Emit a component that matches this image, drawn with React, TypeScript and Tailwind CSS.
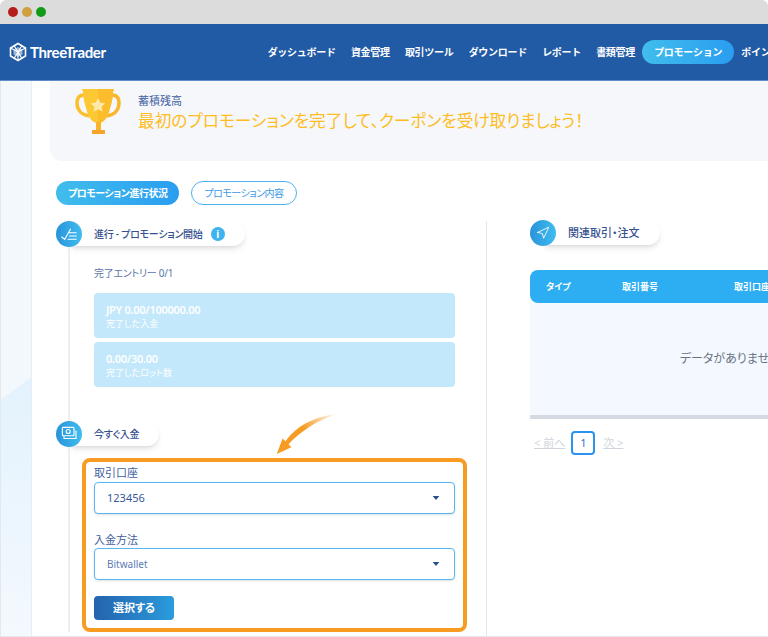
import React from "react";
import { Navigation } from "lucide-react";

const navItems = ["ダッシュボード", "資金管理", "取引ツール", "ダウンロード", "レポート", "書類管理"];

function Logo() {
  return (
    <svg viewBox="0 0 20 20" className="w-5 h-5 shrink-0" fill="none" stroke="white" strokeWidth="2">
      <path d="M10 1.5 17.5 6v8L10 18.5 2.5 14V6Z" strokeWidth="1.6" />
      <path d="M10 5 14.5 7.5v5L10 15l-4.5-2.5v-5Z" fill="white" stroke="none" opacity="0.55" />
      <path d="M2.5 6 10 10l7.5-4M10 10v8.5M6 3.5l8 13M14 3.5l-8 13" strokeWidth="1.1" />
    </svg>
  );
}

function Trophy() {
  return (
    <svg viewBox="0 0 46 46" className="w-11.5 h-11.5 shrink-0">
      <path d="M9 6C4 6 2 9 2 14c0 8 6 12 12 13" fill="none" stroke="#fbbf2d" strokeWidth="3.5" />
      <path d="M37 6c5 0 7 3 7 8 0 8-6 12-12 13" fill="none" stroke="#f9b62b" strokeWidth="3.5" />
      <path d="M7 0h32l-1 3c0 4-1 10-3 16-2 9-6 15-12 15S13 28 11 19C9 13 8 7 8 3Z" fill="#fdc833" />
      <path d="M23 0h16l-1 3c0 4-1 10-3 16-2 9-6 15-12 15Z" fill="#fbbd2c" />
      <rect x="21" y="33" width="5" height="9" fill="#f9b62b" />
      <rect x="17" y="41" width="13" height="4" rx="0.5" fill="#f6a52a" />
      <path d="m23 9 2.2 4.5 5 .7-3.6 3.5.9 5-4.5-2.4-4.5 2.4.9-5-3.6-3.5 5-.7Z" fill="#fdeaa8" />
    </svg>
  );
}

function CheckListIcon() {
  return (
    <svg viewBox="0 0 20 20" className="w-5 h-5" fill="none" stroke="white" strokeWidth="1.1">
      <path d="M2.4 12.7l3.3 2.6 6-10.6M10 8.7h7.7M10 12h7.7M8.5 15.3h9.2" />
    </svg>
  );
}

function MoneyIcon() {
  return (
    <svg viewBox="0 0 20 20" className="w-5 h-5" fill="none" stroke="white" strokeWidth="1.1">
      <rect x="3.4" y="3.4" width="11.6" height="8.3" rx="0.8" />
      <circle cx="9.2" cy="7.5" r="2" />
      <path d="M5 12v2.5h12V6.5" />
    </svg>
  );
}

function Heading({ icon, children }: { icon: React.ReactNode; children: React.ReactNode }) {
  return (
    <div className="flex items-center h-6.5">
      <div className="z-10 w-6.5 h-6.5 rounded-full bg-linear-to-r from-[#2a93d9] to-[#3fbdf0] flex items-center justify-center shrink-0">
        {icon}
      </div>
      <div className="-ml-3 pl-6 pr-5 h-6 flex items-center gap-2 rounded-r-full bg-white shadow-md text-[#36518f] text-[10px] tracking-tight font-medium">
        {children}
      </div>
    </div>
  );
}

function ProgressCard({ value, label }: { value: string; label: string }) {
  return (
    <div className="h-11.25 rounded-sm bg-[#c3e8fb] px-3 flex flex-col justify-center text-white">
      <div className="text-[11px] leading-4 font-semibold tracking-tight">{value}</div>
      <div className="text-[9px] leading-3">{label}</div>
    </div>
  );
}

function SelectBox({ value, light }: { value: string; light?: boolean }) {
  return (
    <div className="h-8 rounded-sm border border-[#57b6f4] bg-white px-3 flex items-center justify-between shadow-sm">
      <span className={light ? "text-[10px] text-[#5d7bb5]" : "text-[11px] text-[#36589a]"}>{value}</span>
      <svg viewBox="0 0 10 6" className="w-2 h-1 mr-0.5">
        <path d="M0 0h10L5 6Z" fill="#24508f" />
      </svg>
    </div>
  );
}

export default function App() {
  return (
    <div className="h-screen w-full overflow-hidden flex flex-col bg-white font-['Noto_Sans','Noto_Sans_CJK_JP',sans-serif] [font-feature-settings:'palt']">
      <div className="h-6 shrink-0 bg-[#dcdcdc] flex items-center gap-1 pl-2 rounded-t-md">
        <span className="w-2.5 h-2.5 rounded-full bg-[#b71c1c]" />
        <span className="w-2.5 h-2.5 rounded-full bg-[#cfa03f]" />
        <span className="w-2.5 h-2.5 rounded-full bg-[#119b16]" />
      </div>

      <header className="h-14.25 shrink-0 bg-[#215aa5] border-b border-[#5f8cc6] flex items-center pl-2 whitespace-nowrap text-white">
        <Logo />
        <span className="ml-0.5 text-[15px] font-bold tracking-tight font-['Lato',sans-serif]">ThreeTrader</span>
        <nav className="ml-40.5 flex items-center gap-3.75 text-[10px] tracking-tight font-bold shrink-0 [font-feature-settings:normal]">
          {navItems.map((item) => (
            <span key={item}>{item}</span>
          ))}
          <span className="-mx-2 h-6 px-3 flex items-center rounded-full bg-linear-to-r from-[#41bdec] to-[#2a9df0]">プロモーション</span>
          <span>ポイント</span>
        </nav>
      </header>

      <div className="flex-1 min-h-0 flex border-b border-gray-200">
        <div className="relative w-8 shrink-0 bg-[#f3f8fd] border-l border-r border-l-gray-200 border-r-[#e6edf4]">
          <svg viewBox="0 0 30 556" preserveAspectRatio="none" className="absolute inset-0 w-full h-full">
            <defs>
              <linearGradient id="wedge" x1="0" y1="297" x2="0" y2="556" gradientUnits="userSpaceOnUse">
                <stop offset="0" stopColor="#e3f2fd" />
                <stop offset="1" stopColor="#f3f9fe" />
              </linearGradient>
            </defs>
            <path d="M0 319 30 297V556H0Z" fill="url(#wedge)" />
          </svg>
        </div>
        <main className="flex-1 min-w-0">
          <section className="ml-4.5 h-20 rounded-bl-xl bg-[#f6f7fa] flex items-start pl-6.25 pt-2 gap-4.25">
            <Trophy />
            <div className="pt-1">
              <div className="text-[11px] leading-4 text-[#3f5f9f]">蓄積残高</div>
              <div className="text-[16.7px] leading-6 text-[#fdbd22] whitespace-nowrap">最初のプロモーションを完了して、クーポンを受け取りましょう！</div>
            </div>
          </section>

          <div className="ml-6 mt-5 flex gap-3">
            <button className="h-6 px-3 rounded-full bg-linear-to-r from-[#41bdec] to-[#2a9df0] text-white text-[10px] tracking-tighter font-bold">プロモーション進行状況</button>
            <button className="h-6 px-3 rounded-full border border-[#4db2ef] bg-white text-[#3e9be6] text-[10px] tracking-tighter">プロモーション内容</button>
          </div>

          <div className="ml-6 mt-4 flex">
            <div className="w-[431px] shrink-0 border-r border-gray-200 pb-8">
              <div className="ml-3 border-l-2 border-[#eceef2] pl-6 pr-7.75">
                <div className="-ml-9.5">
                  <Heading icon={<CheckListIcon />}>
                    進行 - プロモーション開始
                    <span className="w-3.5 h-3.5 rounded-full bg-[#3fb3ee] text-white text-[10px] font-bold flex items-center justify-center">i</span>
                  </Heading>
                </div>
                <div className="mt-4.5 text-[10px] tracking-tight leading-4 text-[#5c74a8]">完了エントリー 0/1</div>
                <div className="mt-3 flex flex-col gap-1">
                  <ProgressCard value="JPY 0.00/100000.00" label="完了した入金" />
                  <ProgressCard value="0.00/30.00" label="完了したロット数" />
                </div>
                <div className="mt-8.5 -ml-9.5 relative">
                  <Heading icon={<MoneyIcon />}>今すぐ入金</Heading>
                  <svg viewBox="0 0 62 41" className="absolute left-55 -top-1.75 w-15.5 h-10" fill="none">
                    <defs>
                      <linearGradient id="fade" x1="62" y1="0" x2="10" y2="34" gradientUnits="userSpaceOnUse">
                        <stop offset="0" stopColor="#f79b22" stopOpacity="0" />
                        <stop offset="0.6" stopColor="#f79b22" />
                      </linearGradient>
                    </defs>
                    <path d="M62 0C40 2 20 12 9 28L6 25 0 41 15 34 12 31C24 18 42 6 62 0Z" fill="url(#fade)" />
                  </svg>
                </div>
                <div className="-mx-3 mt-2.75 border-4 border-[#f79b22] rounded-lg px-2 pt-0.75 pb-2">
                  <div className="text-[11px] leading-4 mb-px text-[#3f5f9f]">取引口座</div>
                  <SelectBox value="123456" />
                  <div className="mt-4.5 text-[11px] leading-4 text-[#3f5f9f]">入金方法</div>
                  <SelectBox value="Bitwallet" light />
                  <button className="mt-4 w-20 h-6 rounded-sm bg-linear-to-r from-[#2563ae] to-[#2a9cdc] text-white text-[11px] font-bold">選択する</button>
                </div>
              </div>
            </div>

            <div className="pl-10.75 shrink-0">
              <div className="-mt-px">
                <Heading icon={<Navigation size={14} color="white" strokeWidth={1.5} />}>
                  <span className="text-[11px] tracking-normal">関連取引・注文</span>
                </Heading>
              </div>
              <div className="mt-6 w-100">
                <div className="h-8.25 rounded-lg bg-[#2eaef2] flex items-center pl-4 text-white text-[9px] font-bold">
                  <span className="w-19">タイプ</span>
                  <span className="w-28">取引番号</span>
                  <span>取引口座</span>
                </div>
                <div className="h-28 bg-[#f3f9ff] flex items-center justify-center text-xs text-gray-500">データがありません</div>
                <div className="h-1 bg-[#d5d9e1]" />
              </div>
              <div className="mt-3 flex items-center gap-1.5 text-[11px] text-gray-300">
                <span className="underline ml-1">&lt; 前へ</span>
                <span className="w-6 h-6 border-2 border-[#2a93ee] rounded-sm bg-white text-[#2a73c5] flex items-center justify-center">1</span>
                <span className="underline ml-0.5">次 &gt;</span>
              </div>
            </div>
          </div>
        </main>
      </div>
    </div>
  );
}
